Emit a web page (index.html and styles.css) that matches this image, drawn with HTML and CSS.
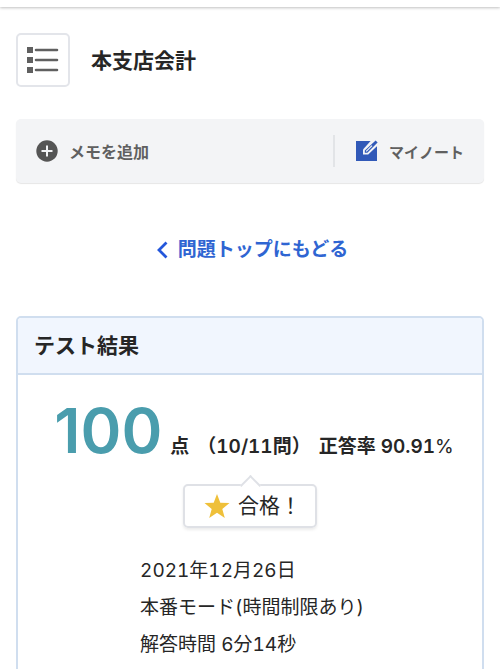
FILE: index.html
```html
<!DOCTYPE html>
<html lang="ja">
<head>
  <meta charset="UTF-8">
  <meta name="viewport" content="width=device-width, initial-scale=1">
  <title>本支店会計</title>
  <link rel="stylesheet" href="styles.css">
</head>
<body>

  <div class="top-bar"></div>

  <main class="page">
    <header class="page-header">
      <button type="button" class="menu-button" aria-label="メニュー">
        <svg width="32" height="28" viewBox="0 0 32 28">
          <path fill="#606060" d="M0 1h6v6H0zM0 11h6v6H0zM0 21h6v6H0z"/>
          <path stroke="#606060" stroke-width="2.6" stroke-linecap="round" d="M9 4h21M9 14h21M9 24h21"/>
        </svg>
      </button>
      <h1 class="page-title">本支店会計</h1>
    </header>

    <div class="note-bar">
      <button type="button" class="note-add">
        <svg width="22" height="22" viewBox="0 0 22 22">
          <circle cx="11" cy="11" r="10.7" fill="#555"/>
          <path stroke="#f3f4f6" stroke-width="2" d="M11 5.5v11M5.5 11h11"/>
        </svg>
        メモを追加
      </button>
      <a href="#" class="note-link">
        <svg width="22" height="22" viewBox="0 0 22 22">
          <path fill="#3159b8" d="M0 1h21v20H0z"/>
          <path fill="#f3f4f6" d="M15.5 0H22v5.2L12.2 14.6H7V9.6z"/>
          <path fill="#3159b8" d="M19.6 0.6L21.6 2.4 11.4 12.8H8.8V10.4z"/>
          <path stroke="#f3f4f6" stroke-width="1.2" d="M10.2 11.4L16 5.6"/>
        </svg>
        マイノート
      </a>
    </div>

    <a href="#" class="back-link">
      <svg width="12" height="18" viewBox="0 0 12 18">
        <path fill="none" stroke="#2457db" stroke-width="2.8" d="M10.5 1.5L3 9l7.5 7.5"/>
      </svg>
      問題トップにもどる
    </a>

    <section class="result">
      <h2 class="result-title">テスト結果</h2>
      <div class="result-body">
        <p class="score">
          <span class="score-point">100</span>
          <span>点</span>
          <span>（10/11問）</span>
          <span>正答率 90.91<span class="percent">%</span></span>
        </p>
        <div class="judge">
          <svg width="26" height="25" viewBox="0 0 26 25">
            <path fill="#efc03a" d="M13 0l3.3 8.7 9.2.4-7.2 5.8 2.5 9-7.8-5.1-7.8 5.1 2.5-9L.5 9.1l9.2-.4z"/>
          </svg>
          合格！
        </div>
        <div class="detail">
          <p>2021年12月26日</p>
          <p>本番モード(時間制限あり)</p>
          <p>解答時間 6分14秒</p>
        </div>
      </div>
    </section>
  </main>

</body>
</html>
```

FILE: styles.css
```css
* {
  box-sizing: border-box;
}

body {
  margin: 0;
  background-color: #fff;
  color: #262626;
  font-family: Inter, "Noto Sans CJK JP", sans-serif;
  font-size: 19px;
  font-variant-numeric: tabular-nums;
}

h1, h2, p {
  margin: 0;
}

button {
  font-family: inherit;
  padding: 0;
  border: none;
  background: none;
  cursor: pointer;
}

a {
  text-decoration: none;
}

svg {
  flex-shrink: 0;
}

.top-bar {
  height: 7px;
  background-color: #fff;
  box-shadow: 0 1px 3px rgba(0, 0, 0, 0.25);
}

.page {
  padding: 26px 16px 0;
}

.page-header {
  display: flex;
  align-items: center;
  gap: 21px;
}

.menu-button {
  display: flex;
  align-items: center;
  justify-content: center;
  width: 54px;
  height: 54px;
  border: 2px solid #e3e5ea;
  border-radius: 5px;
}

.page-title {
  padding-top: 2px;
  font-size: 21px;
  line-height: 32px;
}

.note-bar {
  display: flex;
  align-items: center;
  justify-content: space-between;
  margin-top: 32px;
  padding: 16px 20px;
  background-color: #f3f4f6;
  border-radius: 5px;
  box-shadow: 0 1px 1px rgba(0, 0, 0, 0.1);
}

.note-add, .note-link {
  display: flex;
  align-items: center;
  gap: 11px;
  height: 32px;
  color: #606060;
  font-size: 16px;
  font-weight: 700;
}

.note-link {
  padding-left: 21px;
  border-left: 2px solid #e2e4e7;
  font-size: 15px;
}

.back-link {
  display: flex;
  align-items: center;
  justify-content: center;
  gap: 10px;
  margin-top: 51px;
  padding-left: 4px;
  color: #2f65d2;
  font-size: 19px;
  font-weight: 700;
  line-height: 32px;
}

.result {
  margin-top: 50px;
  border: 2px solid #d0deef;
  border-radius: 5px;
}

.result-title {
  padding: 12px 16px 11px;
  background-color: #f1f6fe;
  border-bottom: 2px solid #d0deef;
  border-radius: 4px 4px 0 0;
  font-size: 21px;
  line-height: 32px;
}

.result-body {
  display: flex;
  flex-direction: column;
  align-items: center;
  padding: 16px 0;
}

.score {
  display: flex;
  align-items: baseline;
  gap: 8px;
  padding-left: 8px;
  font-weight: 600;
  line-height: 80px;
  white-space: nowrap;
}

.score-point {
  color: #4a9dad;
  font-size: 62px;
  font-variant-numeric: normal;
}

.percent {
  font-weight: 400;
}

.judge {
  position: relative;
  display: flex;
  align-items: center;
  gap: 8px;
  margin-top: -3px;
  padding: 4px 14px 4px 19px;
  border: 2px solid #dfe1e6;
  border-radius: 5px;
  box-shadow: 0 2px 3px rgba(0, 0, 0, 0.08);
  font-size: 21px;
  line-height: 32px;
}

/* balloon tip */
.judge::before {
  content: "";
  position: absolute;
  top: -8px;
  left: 50%;
  width: 13px;
  height: 13px;
  margin-left: -7px;
  background-color: #fff;
  border-top: 2px solid #dfe1e6;
  border-left: 2px solid #dfe1e6;
  transform: rotate(45deg);
}

.detail {
  margin-top: 24px;
  padding-left: 4px;
  line-height: 37px;
}
```
